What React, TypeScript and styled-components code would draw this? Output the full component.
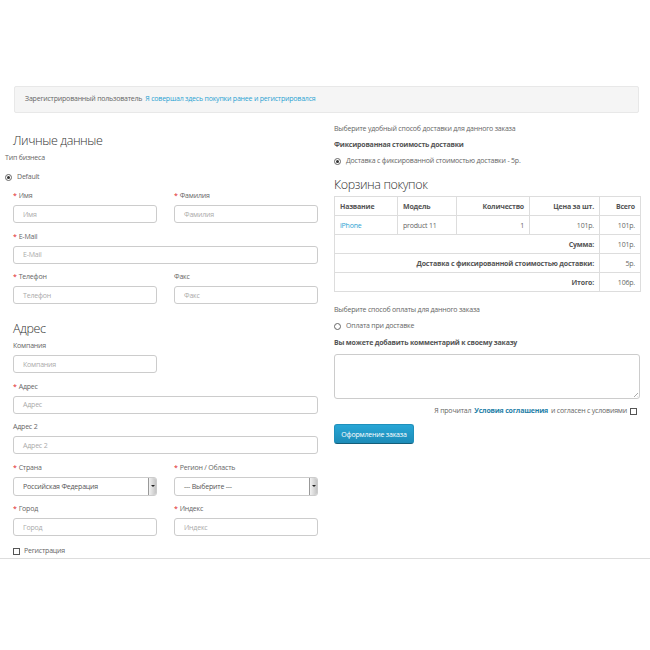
import React from 'react';
import styled, { createGlobalStyle } from 'styled-components';

const GlobalStyle = createGlobalStyle`
  html, body {
    margin: 0;
    padding: 0;
    background: #fff;
  }
  body {
    font-family: 'Open Sans', 'Liberation Sans', sans-serif;
    font-size: 7px;
    letter-spacing: -0.2px;
    color: #666;
  }
`;

const Page = styled.div`
  width: 650px;
  height: 650px;
  box-sizing: border-box;
  padding-top: 86px;
  overflow: hidden;
`;

const Content = styled.div`
  padding: 0 11px 0 13px;
  height: 473px;
  box-sizing: border-box;
  border-bottom: 1px solid #ddd;
`;

const Banner = styled.div`
  height: 27px;
  margin-left: 1px;
  box-sizing: border-box;
  background: #f5f5f5;
  border: 1px solid #e8e8e8;
  border-radius: 2px;
  display: flex;
  align-items: center;
  padding: 0 10px 2px;
  color: #666;
  line-height: 10px;
`;

const Link = styled.a`
  color: #2ba3d3;
  text-decoration: none;
  margin-left: 3px;
`;

const Columns = styled.div`
  display: grid;
  grid-template-columns: 305px 306px;
  column-gap: 16px;
  margin-top: 9px;
`;

const Column = styled.div`
  display: flex;
  flex-direction: column;
`;

const Heading = styled.h2<{ $top: number }>`
  margin: ${(p) => p.$top}px 0 0;
  font-size: 12.5px;
  letter-spacing: -0.4px;
  line-height: 16px;
  font-weight: 300;
  color: #333;
`;

const Text = styled.div<{ $top?: number; $bold?: boolean; $shift?: number }>`
  margin-top: ${(p) => p.$top ?? 0}px;
  margin-left: ${(p) => -(p.$shift ?? 0)}px;
  line-height: 10px;
  font-weight: ${(p) => (p.$bold ? 700 : 400)};
  color: ${(p) => (p.$bold ? '#555' : '#666')};
  display: flex;
  align-items: center;
`;

const Radio = styled.span<{ $checked?: boolean }>`
  width: 5px;
  height: 5px;
  border-radius: 50%;
  border: 1px solid #666;
  margin-right: 5px;
  position: relative;
  flex: none;
  &::after {
    content: '';
    display: ${(p) => (p.$checked ? 'block' : 'none')};
    position: absolute;
    left: 1px;
    top: 1px;
    width: 3px;
    height: 3px;
    border-radius: 50%;
    background: #333;
  }
`;

const Check = styled.span<{ $end?: boolean }>`
  width: 5px;
  height: 5px;
  border: 1px solid #555;
  background: #fff;
  flex: none;
  margin: ${(p) => (p.$end ? '0 0 0 3px' : '0 4px 0 0')};
`;

const Row = styled.div`
  display: grid;
  grid-template-columns: 144px 144px;
  column-gap: 17px;
`;

const Field = styled.div<{ $top?: number }>`
  display: flex;
  flex-direction: column;
  margin-top: ${(p) => p.$top ?? 8.5}px;
`;

const Label = styled.label`
  line-height: 10px;
  margin-bottom: 4px;
  color: #666;
`;

const Star = styled.span`
  color: #e02020;
  margin-right: 2px;
`;

const Input = styled.div<{ $narrow?: boolean }>`
  height: 18px;
  width: ${(p) => (p.$narrow ? '144px' : '100%')};
  box-sizing: border-box;
  border: 1px solid #ccc;
  border-radius: 3px;
  padding: 0 9px;
  display: flex;
  align-items: center;
  color: #aaa;
  background: #fff;
`;

const Select = styled.div`
  height: 19px;
  box-sizing: border-box;
  border: 1px solid #ccc;
  border-radius: 3px;
  display: flex;
  align-items: center;
  justify-content: space-between;
  padding-left: 9px;
  color: #555;
  overflow: hidden;
`;

const SelectArrow = styled.span`
  width: 8px;
  height: 100%;
  box-sizing: border-box;
  border-left: 1px solid #999;
  background: linear-gradient(90deg, #f2f2f2, #c4c4c4);
  display: flex;
  align-items: center;
  justify-content: center;
  &::after {
    content: '';
    border-left: 2px solid transparent;
    border-right: 2px solid transparent;
    border-top: 2px solid #222;
  }
`;

const Table = styled.table`
  margin-top: 3px;
  width: 100%;
  border-collapse: collapse;
  table-layout: fixed;
`;

const Cell = styled.td<{ $right?: boolean; $head?: boolean }>`
  border: 1px solid #ddd;
  height: 18px;
  padding: 0 5px;
  text-align: ${(p) => (p.$right ? 'right' : 'left')};
  font-weight: ${(p) => (p.$head ? 700 : 400)};
  color: ${(p) => (p.$head ? '#555' : '#666')};
  white-space: nowrap;
  overflow: hidden;
`;

const TableLink = styled.a`
  color: #2ba3d3;
  text-decoration: none;
`;

const TextArea = styled.div`
  margin-top: 6px;
  height: 45px;
  box-sizing: border-box;
  border: 1px solid #ccc;
  border-radius: 3px;
  position: relative;
  &::after {
    content: '';
    position: absolute;
    right: 1px;
    bottom: 1px;
    width: 4px;
    height: 4px;
    background: linear-gradient(135deg, transparent 45%, #aaa 50%, transparent 60%, transparent 75%, #aaa 80%, transparent 90%);
  }
`;

const Agree = styled.div`
  margin-top: 7px;
  line-height: 10px;
  display: flex;
  justify-content: flex-end;
  align-items: center;
  padding-right: 3px;
  color: #666;
`;

const AgreeLink = styled.b`
  color: #1f7fa8;
  margin: 0 3px;
`;

const Button = styled.button`
  margin-top: 8px;
  width: 80px;
  height: 20px;
  border: 1px solid #1f90bb;
  border-bottom-color: #145e7a;
  border-radius: 3px;
  background: linear-gradient(#28a6d6, #1d8cb8);
  color: #fff;
  font-family: inherit;
  font-size: 7px;
  letter-spacing: -0.2px;
  padding: 0;
`;

const rows = [
  { label: 'Сумма:', value: '101р.' },
  { label: 'Доставка с фиксированной стоимостью доставки:', value: '5р.' },
  { label: 'Итого:', value: '106р.' },
];

const TextInput = ({ label, required, narrow, top }: { label: string; required?: boolean; narrow?: boolean; top?: number }) => (
  <Field $top={top}>
    <Label>
      {required && <Star>*</Star>}
      {label}
    </Label>
    <Input $narrow={narrow}>{label}</Input>
  </Field>
);

const App: React.FC = () => {
  return (
    <Page>
      <GlobalStyle />
      <Content>
        <Banner>
          Зарегистрированный пользователь
          <Link>Я совершал здесь покупки ранее и регистрировался</Link>
        </Banner>
        <Columns>
          <Column>
            <Heading $top={11}>Личные данные</Heading>
            <Text $top={4} $shift={8}>Тип бизнеса</Text>
            <Text $top={9} $shift={8}>
              <Radio $checked />
              Default
            </Text>
            <Row>
              <TextInput label="Имя" required top={9} />
              <TextInput label="Фамилия" required top={9} />
            </Row>
            <TextInput label="E-Mail" required />
            <Row>
              <TextInput label="Телефон" required />
              <TextInput label="Факс" />
            </Row>
            <Heading $top={17}>Адрес</Heading>
            <TextInput label="Компания" narrow top={4} />
            <TextInput label="Адрес" required />
            <TextInput label="Адрес 2" />
            <Row>
              <Field>
                <Label>
                  <Star>*</Star>Страна
                </Label>
                <Select>
                  Российская Федерация
                  <SelectArrow />
                </Select>
              </Field>
              <Field>
                <Label>
                  <Star>*</Star>Регион / Область
                </Label>
                <Select>
                  --- Выберите ---
                  <SelectArrow />
                </Select>
              </Field>
            </Row>
            <Row>
              <TextInput label="Город" required />
              <TextInput label="Индекс" required />
            </Row>
            <Text $top={10}>
              <Check />
              Регистрация
            </Text>
          </Column>
          <Column>
            <Text $top={2}>Выберите удобный способ доставки для данного заказа</Text>
            <Text $top={6} $bold>Фиксированная стоимость доставки</Text>
            <Text $top={6}>
              <Radio $checked />
              Доставка с фиксированной стоимостью доставки - 5р.
            </Text>
            <Heading $top={11}>Корзина покупок</Heading>
            <Table>
              <colgroup>
                <col style={{ width: 63 }} />
                <col style={{ width: 59 }} />
                <col style={{ width: 73 }} />
                <col style={{ width: 70 }} />
                <col style={{ width: 41 }} />
              </colgroup>
              <tbody>
                <tr>
                  <Cell $head>Название</Cell>
                  <Cell $head>Модель</Cell>
                  <Cell $head $right>Количество</Cell>
                  <Cell $head $right>Цена за шт.</Cell>
                  <Cell $head $right>Всего</Cell>
                </tr>
                <tr>
                  <Cell>
                    <TableLink>iPhone</TableLink>
                  </Cell>
                  <Cell>product 11</Cell>
                  <Cell $right>1</Cell>
                  <Cell $right>101р.</Cell>
                  <Cell $right>101р.</Cell>
                </tr>
                {rows.map((r) => (
                  <tr key={r.label}>
                    <Cell $head $right colSpan={4}>
                      {r.label}
                    </Cell>
                    <Cell $right>{r.value}</Cell>
                  </tr>
                ))}
              </tbody>
            </Table>
            <Text $top={13}>Выберите способ оплаты для данного заказа</Text>
            <Text $top={6}>
              <Radio />
              Оплата при доставке
            </Text>
            <Text $top={7} $bold>Вы можете добавить комментарий к своему заказу</Text>
            <TextArea />
            <Agree>
              Я прочитал<AgreeLink>Условия соглашения</AgreeLink>и согласен с условиями
              <Check $end />
            </Agree>
            <Button>Оформление заказа</Button>
          </Column>
        </Columns>
      </Content>
    </Page>
  );
};

export default App;
